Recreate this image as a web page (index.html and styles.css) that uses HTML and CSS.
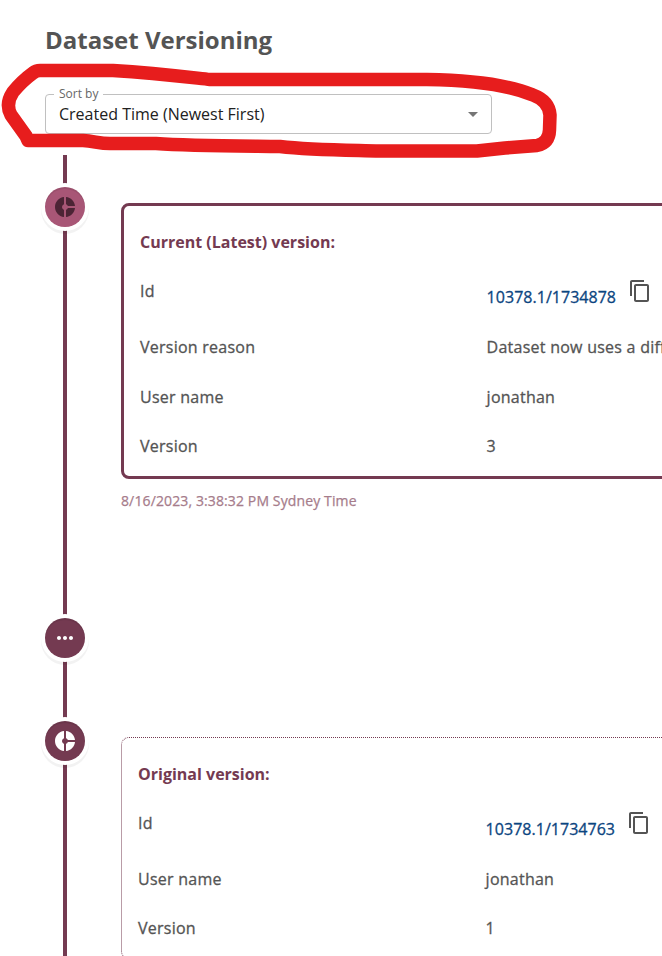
FILE: index.html
```html
<!DOCTYPE html>
<html lang="en">
<head>
<meta charset="utf-8">
<title>Dataset Versioning</title>
<link rel="stylesheet" href="styles.css">
</head>
<body>
<svg class="defs" width="0" height="0" aria-hidden="true">
  <symbol id="donut" viewBox="0 0 24 24"><path d="M11 9.16V2c-5 .5-9 4.79-9 10s4 9.5 9 10v-7.16c-1-.41-2-1.52-2-2.84s1-2.43 2-2.84zM14.86 11H22c-.48-4.75-4-8.53-9-9v7.16c1 .3 1.52.98 1.86 1.84zM13 14.84V22c5-.47 8.52-4.25 9-9h-7.14c-.34.86-.86 1.54-1.86 1.84z"/></symbol>
  <symbol id="more" viewBox="0 0 24 24"><path d="M6 10c-1.1 0-2 .9-2 2s.9 2 2 2 2-.9 2-2-.9-2-2-2zm12 0c-1.1 0-2 .9-2 2s.9 2 2 2 2-.9 2-2-.9-2-2-2zm-6 0c-1.1 0-2 .9-2 2s.9 2 2 2 2-.9 2-2-.9-2-2-2z"/></symbol>
  <symbol id="copy" viewBox="0 0 24 24"><path d="M16 1H4c-1.100 0-2 .9-2 2v14h2V3h12V1zm3 4H8c-1.100 0-2 .9-2 2v14c0 1.100.9 2 2 2h11c1.100 0 2-.9 2-2V7c0-1.100-.9-2-2-2zm0 16H8V7h11v14z"/></symbol>
</svg>
<main class="page">
  <h1 class="title">Dataset Versioning</h1>
  <div class="select">
    <span class="select-label">Sort by</span>
    <span class="select-value">Created Time (Newest First)</span>
    <svg class="select-arrow" viewBox="0 0 24 24"><path d="M7 10l5 5 5-5z"/></svg>
  </div>
  <section class="timeline">
    <article class="entry entry-current">
      <span class="marker marker-current"><svg class="marker-icon"><use href="#donut"/></svg></span>
      <div class="entry-body">
        <div class="card card-current">
          <h2 class="card-title">Current (Latest) version:</h2>
          <dl class="fields">
            <div class="row row-id"><dt>Id</dt><dd><a class="link">10378.1/1734878</a><svg class="copy"><use href="#copy"/></svg></dd></div>
            <div class="row"><dt>Version reason</dt><dd>Dataset now uses a diff</dd></div>
            <div class="row"><dt>User name</dt><dd>jonathan</dd></div>
            <div class="row"><dt>Version</dt><dd>3</dd></div>
          </dl>
        </div>
        <time class="date">8/16/2023, 3:38:32 PM Sydney Time</time>
      </div>
    </article>
    <article class="entry entry-more">
      <span class="marker"><svg class="marker-icon"><use href="#more"/></svg></span>
    </article>
    <article class="entry entry-original">
      <span class="marker"><svg class="marker-icon"><use href="#donut"/></svg></span>
      <div class="entry-body">
        <div class="card card-original">
          <h2 class="card-title">Original version:</h2>
          <dl class="fields">
            <div class="row row-id"><dt>Id</dt><dd><a class="link">10378.1/1734763</a><svg class="copy"><use href="#copy"/></svg></dd></div>
            <div class="row"><dt>User name</dt><dd>jonathan</dd></div>
            <div class="row"><dt>Version</dt><dd>1</dd></div>
          </dl>
        </div>
      </div>
    </article>
  </section>
  <svg class="annotation" viewBox="0 0 662 180"><path d="M28 140.500 H83 C94 141 99 143.500 110 143.500 H156 C190 146 240 146 280 146.500 C310 150 340 150 380 151 H477 L505 148 L537 145.500 Q549 143 549.500 130 L550 115 Q549 101 533 95 C504 83 460 80 427 79.500 H210 C195 78 160 73.500 113 70.500 H40 Q36 70.500 33 73 Q22 81 13 92 Q5 104 11 115 L26 136 Z"/></svg>
</main>
</body>
</html>
```
FILE: styles.css
```css
* { box-sizing: border-box; }
html, body { overflow: hidden; }
body {
  margin: 0;
  height: 956px;
  background: #fff;
  color: #545454;
  font: 500 16px/24px "Open Sans", sans-serif;
}
.defs { position: absolute; }
.page {
  position: relative;
  height: 956px;
  padding: 24px 0 0 45px;
  overflow: hidden;
}
.title { margin: 0; font-size: 24px; line-height: 32px; font-weight: 700; }
.select {
  position: relative;
  display: flex;
  align-items: center;
  justify-content: space-between;
  width: 447px;
  height: 40px;
  margin-top: 38px;
  padding: 0 6px 0 13px;
  border: 1px solid #c0c0c0;
  border-radius: 4px;
}
.select-label {
  position: absolute;
  top: -11px;
  left: 8px;
  padding: 0 5px;
  background: #fff;
  color: #666;
  font-size: 12px;
  line-height: 20px;
  font-weight: 400;
}
.select-value { color: #212121; font-weight: 400; }
.select-arrow { width: 24px; height: 24px; fill: #757575; }
.timeline {
  width: 900px;
  margin-top: 21px;
  padding-top: 32px;
  height: 850px;
  background: linear-gradient(#743a51, #743a51) 18px 0 / 4px 100% no-repeat;
}
.entry { display: grid; grid-template-columns: 40px 1fr; column-gap: 36px; }
.entry-current { height: 431px; }
.entry-more { height: 103px; }
.entry-body { padding-top: 16px; }
.marker {
  display: flex;
  align-items: center;
  justify-content: center;
  width: 40px;
  height: 40px;
  border-radius: 50%;
  background: #743a51;
  color: #fff;
  box-shadow: 0 0 0 4px #fff, inset 0 2px 0 rgba(0,0,0,.08), 0 3px 0 4px rgba(0,0,0,.05);
}
.marker-current { background: #a85676; color: #4c2435; }
.marker-icon { width: 24px; height: 24px; fill: currentColor; }
.card { border-radius: 8px; padding: 24px 16px 0; }
.card-current { height: 276px; border: 3px solid #743a51; }
.card-original { height: 222px; border: 1px dotted #743a51; }
.card-title { margin: 0; color: #743a51; font-size: 16px; line-height: 24px; font-weight: 700; }
.fields { margin: 25px 0 0; display: grid; row-gap: 25.500px; }
.card-original .fields { row-gap: 25.200px; }
.row {
  display: grid;
  grid-template-columns: 346.600px 1fr;
  letter-spacing: .25px;
  -webkit-text-stroke: .3px currentColor;
}
.card-original .row { grid-template-columns: 347.600px 1fr; }
.row-id { height: 30.500px; }
.row dd { margin: 0; white-space: nowrap; }
.row-id dd { display: flex; align-items: flex-start; }
.link { color: #0b4580; margin-top: 6px; letter-spacing: .03px; }
.copy { width: 24px; height: 24px; margin-left: 12px; fill: #545454; }
.date {
  display: block;
  margin-top: 10px;
  color: #a67c8b;
  font-size: 14px;
  line-height: 24px;
  letter-spacing: .12px;
  -webkit-text-stroke: .25px currentColor;
}
.annotation {
  position: absolute;
  top: 0;
  left: 0;
  width: 662px;
  height: 180px;
  fill: none;
  stroke: #e71d1d;
  stroke-width: 13.500px;
  stroke-linejoin: round;
  pointer-events: none;
}
```
